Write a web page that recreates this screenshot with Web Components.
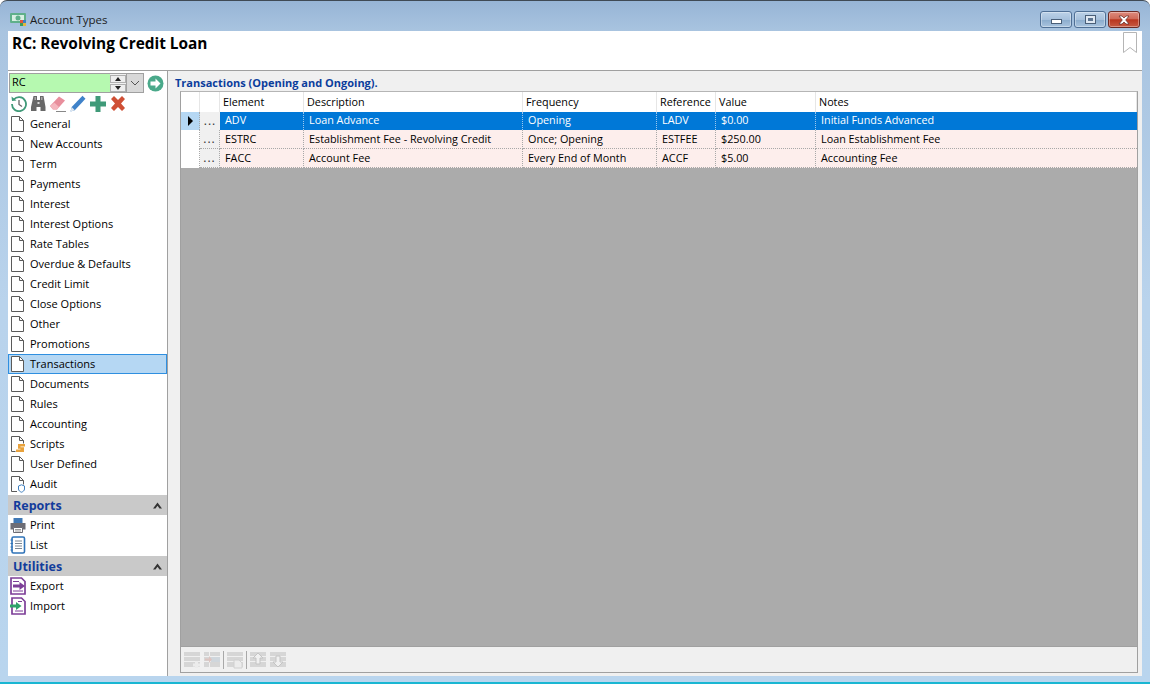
<!DOCTYPE html>
<html>
<head>
<meta charset="utf-8">
<title>Account Types</title>
<style>
  html, body { margin: 0; padding: 0; width: 1150px; height: 684px; overflow: hidden; background: #fff; }
  body { font-family: "Open Sans", "Noto Sans", sans-serif; font-size: 11px; color: #000; }
</style>
</head>
<body>
<app-window title="Account Types">
  <app-sidebar slot="side">
    <nav-combo value="RC"></nav-combo>
    <nav-tools></nav-tools>
    <nav-item label="General"></nav-item>
    <nav-item label="New Accounts"></nav-item>
    <nav-item label="Term"></nav-item>
    <nav-item label="Payments"></nav-item>
    <nav-item label="Interest"></nav-item>
    <nav-item label="Interest Options"></nav-item>
    <nav-item label="Rate Tables"></nav-item>
    <nav-item label="Overdue &amp; Defaults"></nav-item>
    <nav-item label="Credit Limit"></nav-item>
    <nav-item label="Close Options"></nav-item>
    <nav-item label="Other"></nav-item>
    <nav-item label="Promotions"></nav-item>
    <nav-item label="Transactions" selected></nav-item>
    <nav-item label="Documents"></nav-item>
    <nav-item label="Rules"></nav-item>
    <nav-item label="Accounting"></nav-item>
    <nav-item label="Scripts" icon="script"></nav-item>
    <nav-item label="User Defined"></nav-item>
    <nav-item label="Audit" icon="audit"></nav-item>
    <nav-section label="Reports"></nav-section>
    <nav-item label="Print" icon="print"></nav-item>
    <nav-item label="List" icon="list"></nav-item>
    <nav-section label="Utilities"></nav-section>
    <nav-item label="Export" icon="export"></nav-item>
    <nav-item label="Import" icon="import"></nav-item>
  </app-sidebar>
  <tx-panel slot="main" caption="Transactions (Opening and Ongoing).">
    <tx-row header cells="Element|Description|Frequency|Reference|Value|Notes"></tx-row>
    <tx-row current cells="ADV|Loan Advance|Opening|LADV|$0.00|Initial Funds Advanced"></tx-row>
    <tx-row cells="ESTRC|Establishment Fee - Revolving Credit|Once; Opening|ESTFEE|$250.00|Loan Establishment Fee"></tx-row>
    <tx-row cells="FACC|Account Fee|Every End of Month|ACCF|$5.00|Accounting Fee"></tx-row>
  </tx-panel>
</app-window>

<script>
const ICONS = {
  doc: `<svg width="16" height="18" viewBox="0 0 16 18"><path d="M1.500 1.500h8l4 4v11h-12z" fill="#fff" stroke="#5a5a5a"/><path d="M9.500 1.500v4h4" fill="none" stroke="#5a5a5a"/></svg>`,
  script: `<svg width="16" height="18" viewBox="0 0 16 18"><path d="M1.500 16.500v-15h8l4 4v3" fill="none" stroke="#5a5a5a"/><path d="M9.500 1.500v4h4M1.500 16.500h4" fill="none" stroke="#5a5a5a"/><path d="M8 9h7v2.500h-4.500v.8H14V17H6v-2.500h4.500v-.8H8z" fill="#e9a23b"/></svg>`,
  audit: `<svg width="16" height="18" viewBox="0 0 16 18"><path d="M1.500 16.500v-15h8l4 4v4" fill="none" stroke="#5a5a5a"/><path d="M9.500 1.500v4h4M1.500 16.500h5.500" fill="none" stroke="#5a5a5a"/><path d="M8.500 11l3-1.200 3 1.200v3c0 1.600-1.400 2.600-3 3.200-1.600-.6-3-1.600-3-3.200z" fill="#fff" stroke="#3f7fbf"/></svg>`,
  print: `<svg width="16" height="18" viewBox="0 0 16 18"><path d="M3.500 2h9v5h-9z" fill="#3f78b5"/><path d="M.5 7h15v6.500h-3v-2h-9v2h-3z" fill="#6d6d75"/><path d="M3.500 11.500h9v5h-9z" fill="#fff" stroke="#6d6d75"/><path d="M5 13.500h6M5 15h6" stroke="#9a9a9a"/></svg>`,
  list: `<svg width="16" height="18" viewBox="0 0 16 18"><rect x="2" y="1" width="12.500" height="16" rx="1.500" fill="#fff" stroke="#2f73b8" stroke-width="1.600"/><path d="M5 5h7M5 7.500h7M5 10h7M5 12.500h7" stroke="#7b8794"/><path d="M.5 4h2.500M.5 7.500h2.500M.5 11h2.500M.5 14h2.500" stroke="#2f73b8"/></svg>`,
  export: `<svg width="16" height="18" viewBox="0 0 16 18"><path d="M1 1h10.500l3.500 3.500V17H1z" fill="#fff" stroke="#7d3f98" stroke-width="1.700"/><path d="M3 4.500h6M3 14h10" stroke="#7d3f98" stroke-width="1.200"/><path d="M3 7.500h6.500V5L15 9l-5.500 4v-2.500H3z" fill="#7d3f98"/></svg>`,
  import: `<svg width="16" height="18" viewBox="0 0 16 18"><path d="M2 1h9.500L15 4.500V17H2z" fill="#fff" stroke="#7d3f98" stroke-width="1.700"/><path d="M8 4.500h4M5 14h8" stroke="#7d3f98" stroke-width="1.200"/><path d="M0 7.500h6V5l5.500 4L6 13v-2.500H0z" fill="#2fa36b"/></svg>`
};

const TILE = inner => `<svg width="16" height="18" viewBox="0 0 16 18"><g fill="#d6d6d6"><path d="M0 1h16v4H0zM0 6h16v4H0zM0 11h16v5H0z"/></g>${inner}</svg>`;

class AppWindow extends HTMLElement {
  constructor() {
    super();
    this.attachShadow({ mode: 'open' });
    this.shadowRoot.innerHTML = `
      <style>
        :host { display: flex; flex-direction: column; box-sizing: border-box; width: 1150px; height: 684px; position: relative;
          background: linear-gradient(180deg, #97b5d6 0, #a9c4e0 31px, #b9d3ec 300px, #b9d5ee 100%);
          border-top: 1px solid #3f4a55; border-radius: 7px 7px 0 0; }
        .title { height: 30px; box-sizing: border-box; flex: none; display: flex; align-items: center; padding: 7px 10px 0 10px; font-size: 11.5px; color: #1c1c1c; }
        .title span { flex: 1; margin-left: 3px; }
        .btn { width: 32px; height: 17px; margin-left: 2px; box-sizing: border-box; border: 1px solid #4f6f95; border-radius: 3px;
          background: linear-gradient(180deg, #bcd2e8 0, #a6c0dc 50%, #8baccd 52%, #a9c4df 100%);
          display: flex; align-items: center; justify-content: center; box-shadow: inset 0 0 0 1px rgba(255,255,255,.35); }
        .btn.close { border-color: #6b2a24; background: linear-gradient(180deg, #dd8b7d 0, #cf6a58 45%, #b9361f 52%, #c75a42 100%); }
        .btn i { display: block; box-sizing: border-box; }
        .min { width: 11px; height: 5px; background: #fff; border: 1px solid #4a5f78; margin-top: 4px; }
        .max { width: 11px; height: 9px; border: 1px solid #4a5f78; background: #dfe8f2; position: relative; }
        .max::after { content: ""; position: absolute; left: 2px; top: 2px; width: 5px; height: 3px; background: #5d7591; }
        .client { flex: 1; min-height: 0; margin: 0 8px 8px; display: flex; flex-direction: column; }
        .head { height: 39px; flex: none; background: #fff; border-bottom: 1px solid #a0a0a0; display: flex; justify-content: space-between; padding: 0 4px; }
        .head b { font-size: 15.4px; line-height: 20px; margin-top: 3px; }
        .body { flex: 1; min-height: 0; display: flex; }
        .foot { position: absolute; left: 0; right: 0; bottom: 0; height: 2px; background: #19b6d2; }
      </style>
      <div class="title">
        <svg width="17" height="15" viewBox="0 0 17 15"><rect x="0" y="1" width="16" height="10" rx="1" fill="#5fb08a"/><rect x="2" y="3" width="12" height="6" fill="#d8efe2"/><circle cx="8" cy="6" r="2.500" fill="#5fb08a"/><rect x="10" y="8" width="3" height="3" fill="#e0553b"/><rect x="13" y="8" width="3" height="3" fill="#3a7fc4"/><rect x="10" y="11" width="3" height="3" fill="#3a9a5c"/><rect x="13" y="11" width="3" height="3" fill="#e3b53b"/></svg>
        <span>${this.getAttribute('title')}</span>
        <div class="btn"><i class="min"></i></div>
        <div class="btn"><i class="max"></i></div>
        <div class="btn close"><svg width="14" height="10" viewBox="0 0 14 10"><path d="M2 1h3l2 2 2-2h3L8.700 5 12 9H9L7 7 5 9H2l3.300-4z" fill="#fff" stroke="#5b2a26" stroke-width=".7"/></svg></div>
      </div>
      <div class="client">
        <div class="head"><b>RC: Revolving Credit Loan</b>
          <svg width="16" height="24" viewBox="0 0 16 24"><path d="M1.500 1.500h13v20l-6.500-5-6.500 5z" fill="#fff" stroke="#b5b5b5" stroke-width="1"/></svg>
        </div>
        <div class="body"><slot name="side"></slot><slot name="main"></slot></div>
      </div>
      <div class="foot"></div>`;
  }
}

class AppSidebar extends HTMLElement {
  constructor() {
    super();
    this.attachShadow({ mode: 'open' });
    this.shadowRoot.innerHTML = `
      <style>
        :host { display: block; width: 159px; flex: none; background: #fff; border-right: 1px solid #a0a0a0; }
      </style><slot></slot>`;
  }
}

class NavCombo extends HTMLElement {
  constructor() {
    super();
    this.attachShadow({ mode: 'open' });
    this.shadowRoot.innerHTML = `
      <style>
        :host { display: flex; align-items: center; height: 23px; padding-top: 1px; box-sizing: border-box; background: #fff; }
        .box { width: 135px; height: 20px; margin-left: 1px; box-sizing: border-box; border: 1px solid #a0a0a0; display: flex; background: #b6f9b0; }
        .val { flex: 1; padding-left: 2px; line-height: 16px; font-size: 11px; }
        .spin { width: 16px; display: flex; flex-direction: column; justify-content: center; gap: 1px; background: #f0f0f0; }
        .spin i { display: block; height: 8px; border: 1px solid #b0b0b0; box-sizing: border-box; position: relative; background: #eee; }
        .spin i::after { content: ""; position: absolute; left: 4px; border-left: 3px solid transparent; border-right: 3px solid transparent; }
        .spin i.up::after { top: 1px; border-bottom: 4px solid #222; }
        .spin i.down::after { top: 1px; border-top: 4px solid #222; }
        .drop { width: 16px; background: #d8d8d8; border-left: 1px solid #a0a0a0; display: flex; align-items: center; justify-content: center; }
        .go { margin-left: 3px; }
      </style>
      <div class="box">
        <div class="val">${this.getAttribute('value')}</div>
        <div class="spin"><i class="up"></i><i class="down"></i></div>
        <div class="drop"><svg width="10" height="6" viewBox="0 0 10 6"><path d="M1 1l4 4 4-4" fill="none" stroke="#555"/></svg></div>
      </div>
      <svg class="go" width="17" height="17" viewBox="0 0 17 17"><circle cx="8.500" cy="8.500" r="8" fill="#4aa98a"/><path d="M3.500 6.500h5v-3l5 5-5 5v-3h-5z" fill="#fff"/></svg>`;
  }
}

class NavTools extends HTMLElement {
  constructor() {
    super();
    this.attachShadow({ mode: 'open' });
    this.shadowRoot.innerHTML = `
      <style>
        :host { display: flex; align-items: flex-start; height: 20px; box-sizing: border-box; padding: 1px 0 0 3px; background: #fff; }
        svg { flex: none; margin-right: 4px; }
        svg:first-child { margin-right: 5px; }
      </style>
      <svg width="16" height="17" viewBox="0 0 16 17"><path d="M2.800 4.500A7 7 0 1 1 1 9" fill="none" stroke="#3f9a78" stroke-width="1.800"/><path d="M.5 1.500l.5 4.500L5.500 5.500z" fill="#3f9a78"/><path d="M8 5v4.500l3 2" fill="none" stroke="#666" stroke-width="1.300"/></svg>
      <svg width="15" height="17" viewBox="0 0 15 17"><path d="M2.500 1h3.500v4h3V1h3.500l2 11v4H9.500v-4h-4v4H0v-4z" fill="#686868"/><path d="M3.500 2h1.500v3H3.500zM10 2h1.500v3H10z" fill="#a5a5a5"/><path d="M6.500 7h2v2h-2z" fill="#d8d8d8"/></svg>
      <svg width="16" height="17" viewBox="0 0 16 17"><path d="M0 11L9 1.500l6 4-8 9H3z" fill="#e88e9c"/><path d="M0 11l3 3.500h4L9 12 4.500 7.800z" fill="#f4b6be"/><path d="M6 16.500h10" stroke="#888"/></svg>
      <svg width="16" height="17" viewBox="0 0 16 17"><path d="M.5 16.500l1.200-4.500L12.500.8l3 3L4.800 15.300z" fill="#3f82c9"/><path d="M.5 16.500l1.200-4.500 3.100 3.300z" fill="#dfe7ef"/></svg>
      <svg width="16" height="17" viewBox="0 0 16 17"><path d="M5.500 1h5v5.500H16v5h-5.500V17h-5v-5.500H0v-5h5.500z" fill="#3f9a78"/></svg>
      <svg width="16" height="17" viewBox="0 0 16 17"><path d="M1 4l3-3 4 4 4-4 3 3-4 4.500 4 4.500-3 3-4-4-4 4-3-3 4-4.500z" fill="#cf4f35"/></svg>`;
  }
}

class NavItem extends HTMLElement {
  constructor() {
    super();
    this.attachShadow({ mode: 'open' });
    const icon = ICONS[this.getAttribute('icon')] || ICONS.doc;
    this.shadowRoot.innerHTML = `
      <style>
        :host { display: flex; align-items: center; height: 20px; box-sizing: border-box; padding-left: 2px; gap: 4px; }
        :host([selected]) { background: #b5d7f3; outline: 1px solid #2f8fe0; outline-offset: -1px; }
        svg { flex: none; }
        span { white-space: nowrap; position: relative; top: -1px; }
      </style>${icon}<span>${this.getAttribute('label')}</span>`;
  }
}

class NavSection extends HTMLElement {
  constructor() {
    super();
    this.attachShadow({ mode: 'open' });
    this.shadowRoot.innerHTML = `
      <style>
        :host { display: flex; align-items: center; justify-content: space-between; height: 20px; padding: 0 5px; background: #c9c9c9;
          font-weight: 700; font-size: 12.5px; color: #123c9c; margin-top: 1px; }
      </style><span>${this.getAttribute('label')}</span>
      <svg width="9" height="7" viewBox="0 0 9 7"><path d="M4.500 .5L9 6.500H6.500L4.500 3.800 2.500 6.500H0z" fill="#333"/></svg>`;
  }
}

class TxPanel extends HTMLElement {
  constructor() {
    super();
    this.attachShadow({ mode: 'open' });
    this.shadowRoot.innerHTML = `
      <style>
        :host { display: flex; flex-direction: column; flex: 1; min-width: 0; background: #f0f0f0; padding: 5px 4px 3px 12px; }
        .cap { font-weight: 700; font-size: 11px; line-height: 13px; color: #0b3d9c; margin-left: -5px; height: 15px; }
        .grid { flex: 1; min-height: 0; display: flex; flex-direction: column; border: 1px solid #a0a0a0; border-top-color: #b5b5b5; }
        .rows { flex: none; background: #fff; }
        .empty { flex: 1; background: #ababab; }
        .bar { height: 25px; flex: none; border-top: 1px solid #a0a0a0; display: flex; align-items: center; padding-left: 3px; background: #f0f0f0; }
        .bar svg { flex: none; margin-right: 4px; }
        .sep { width: 1px; height: 18px; background: #a8a8a8; margin: 0 3px 0 -1px; }
      </style>
      <div class="cap">${this.getAttribute('caption')}</div>
      <div class="grid">
        <div class="rows"><slot></slot></div>
        <div class="empty"></div>
        <div class="bar">
          ${TILE('<path d="M9 14h7M12.500 10v7" stroke="#ececec" stroke-width="3"/>')}
          ${TILE('<path d="M5 0h1v18H5z" fill="#f0f0f0"/><path d="M7 6h9v5H7z" fill="#cfd6dc"/><path d="M1 7.500h4V5l3 3.500L5 12V9.500H1z" fill="#dcc4c0"/>')}
          <span class="sep"></span>
          ${TILE('<path d="M7 9h5l3 3v5H7z" fill="#ececec" stroke="#d0d0d0"/>')}
          <span class="sep"></span>
          ${TILE('<path d="M8 2l5 5h-3v6H6V7H3z" fill="#f0f0f0" stroke="#c4c4c4"/>')}
          ${TILE('<path d="M8 16l5-5h-3V5H6v6H3z" fill="#f0f0f0" stroke="#c4c4c4"/>')}
        </div>
      </div>`;
  }
}

class TxRow extends HTMLElement {
  constructor() {
    super();
    this.attachShadow({ mode: 'open' });
    const cells = this.getAttribute('cells').split('|');
    const head = this.hasAttribute('header');
    const cur = this.hasAttribute('current');
    this.shadowRoot.innerHTML = `
      <style>
        :host { display: grid; grid-template-columns: 19px 20px 84px 219px 134px 59px 100px 1fr; height: 19px; background: #fdeeec; box-sizing: border-box; font-size: 10.8px; }
        :host([header]) { height: 20px; background: #fff; }
        :host([current]) { height: 18px; background: #0078d7; color: #fff; }
        div { box-sizing: border-box; border-right: 1px dotted #a8a8a8; border-bottom: 1px dotted #a8a8a8; padding: 0 0 0 5px; line-height: 17px; white-space: nowrap; overflow: hidden; }
        :host([header]) div { padding-left: 3px; line-height: 20px; border-right: 1px solid #e6e6e6; border-bottom: 0; }
        :host([current]) div { border-right-color: #9cc8ee; border-bottom: 0; line-height: 16px; }
        .ind { padding: 0; display: flex; align-items: center; justify-content: center; background: #fff; border-bottom: 0; }
        :host([current]) .ind { background: #b5d7f3; border-right-color: #a8a8a8; }
        .dots { padding: 0; text-align: center; background: #f0f0f0; color: #333; line-height: 18px; font-size: 12px; letter-spacing: 1px; }
        :host([current]) .dots { color: #333; border-right: 0; line-height: 18px; }
        :host([header]) .dots { background: #fff; }
        div:last-child { border-right: 0; }
      </style>
      <div class="ind">${cur ? '<svg width="5" height="10" viewBox="0 0 5 10"><path d="M0 0l5 5-5 5z" fill="#000"/></svg>' : ''}</div>
      <div class="dots">${head ? '' : '...'}</div>
      ${cells.map(c => `<div>${c}</div>`).join('')}`;
  }
}

customElements.define('app-window', AppWindow);
customElements.define('app-sidebar', AppSidebar);
customElements.define('nav-combo', NavCombo);
customElements.define('nav-tools', NavTools);
customElements.define('nav-item', NavItem);
customElements.define('nav-section', NavSection);
customElements.define('tx-panel', TxPanel);
customElements.define('tx-row', TxRow);
</script>
</body>
</html>
